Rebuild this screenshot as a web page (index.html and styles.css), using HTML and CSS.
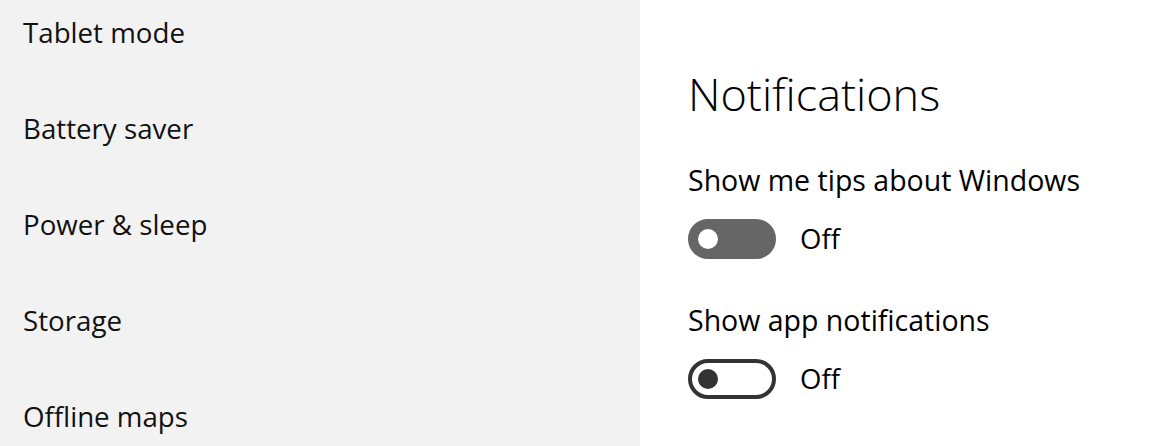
FILE: index.html
```html
<!DOCTYPE html>
<html>
  <head>
    <title>Settings - Notifications</title>
    <meta name="viewport" content="width=device-width, initial-scale=1">
    <link rel="stylesheet" href="styles.css">
  </head>
  <body>
  <div class="page">
    <div class="sidebar">
      <a class="nav-item" href="#">Tablet mode</a>
      <a class="nav-item" href="#">Battery saver</a>
      <a class="nav-item" href="#">Power &amp; sleep</a>
      <a class="nav-item" href="#">Storage</a>
      <a class="nav-item" href="#">Offline maps</a>
    </div>
    <div class="content">
      <h1>Notifications</h1>
      <div class="setting">
        <div class="label">Show me tips about Windows</div>
        <div class="toggle-row">
          <span class="toggle hover"><span class="knob"></span></span>
          <span class="state">Off</span>
        </div>
      </div>
      <div class="setting">
        <div class="label">Show app notifications</div>
        <div class="toggle-row">
          <span class="toggle"><span class="knob"></span></span>
          <span class="state">Off</span>
        </div>
      </div>
    </div>
  </div>
  </body>
</html>
```

FILE: styles.css
```css
* {
  font-family: "Open Sans", "Noto Sans", sans-serif;
  color: black;
  padding: 0px;
  margin: 0px;
}
html, body {
  height: 100%;
  background-color: white;
  overflow: hidden;
}
.page {
  display: flex;
  height: 100%;
}
.sidebar {
  width: 640px;
  flex-shrink: 0;
  background-color: #f2f2f2;
  display: flex;
  flex-direction: column;
  padding-top: 10px;
}
.nav-item {
  flex-shrink: 0;
  text-decoration: none;
  font-size: 27.7px;
  line-height: 44px;
  height: 96px;
  padding-left: 23px;
  color: #111;
}
.nav-item:last-child {
  height: 44px;
}
.content {
  padding-left: 48px;
  padding-top: 62px;
}
h1 {
  font-size: 45px;
  font-weight: 300;
  line-height: 64px;
  margin-bottom: 34px;
}
.setting {
  margin-bottom: 41px;
}
.setting:last-child {
  margin-bottom: 0px;
}
.label {
  font-size: 28.5px;
  line-height: 40px;
  margin-bottom: 19px;
}
.toggle-row {
  display: flex;
  align-items: center;
  gap: 24px;
}
.toggle {
  box-sizing: border-box;
  width: 88px;
  height: 40px;
  border: 4px solid #333;
  border-radius: 20px;
  display: flex;
  align-items: center;
  padding-left: 6px;
}
.knob {
  width: 20px;
  height: 20px;
  border-radius: 50%;
  background-color: #333;
}
.toggle.hover {
  background-color: #666;
  border-color: #666;
}
.toggle.hover .knob {
  background-color: white;
}
.state {
  font-size: 27.5px;
  line-height: 40px;
}
```
